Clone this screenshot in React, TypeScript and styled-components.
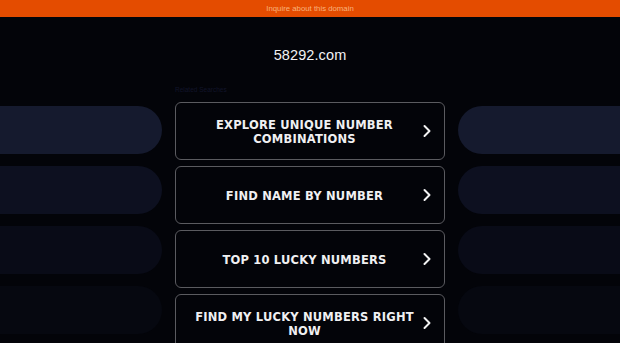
import styled, { createGlobalStyle } from "styled-components";

const GlobalStyle = createGlobalStyle`
  html, body {
    margin: 0;
    padding: 0;
    background: #030409;
  }
  body {
    font-family: "Liberation Sans", Arial, sans-serif;
  }
`;

const searches = [
  "Explore Unique Number Combinations",
  "Find Name by Number",
  "Top 10 Lucky Numbers",
  "Find My Lucky Numbers Right Now",
];

const pillColors = ["#151a2e", "#0d1020", "#090b17", "#060810"];

function Chevron() {
  return (
    <svg width="12" height="14" viewBox="0 0 12 14" fill="none">
      <path d="M3.5 2 L8.5 7 L3.5 12" stroke="#f2f2f2" strokeWidth="2" strokeLinecap="round" strokeLinejoin="round" />
    </svg>
  );
}

export default function App() {
  return (
    <>
      <GlobalStyle />
      <Page>
        <TopBar>Inquire about this domain</TopBar>
        <Domain>58292.com</Domain>
        <Main>
          <SideColumn>
            {pillColors.map((c) => (
              <Pill key={c} color={c} side="left" />
            ))}
          </SideColumn>
          <CenterColumn>
            <Label>Related Searches</Label>
            {searches.map((s) => (
              <SearchButton key={s}>
                <ButtonText>{s}</ButtonText>
                <ChevronBox>
                  <Chevron />
                </ChevronBox>
              </SearchButton>
            ))}
          </CenterColumn>
          <SideColumn>
            {pillColors.map((c) => (
              <Pill key={c} color={c} side="right" />
            ))}
          </SideColumn>
        </Main>
      </Page>
    </>
  );
}

const Page = styled.div`
  width: 620px;
  height: 343px;
  overflow: hidden;
  background: #030409;
`;

const TopBar = styled.div`
  height: 17px;
  background: #e44c00;
  color: #f9b27c;
  font-size: 7.8px;
  display: flex;
  align-items: center;
  justify-content: center;
`;

const Domain = styled.div`
  height: 67px;
  display: flex;
  align-items: center;
  justify-content: center;
  color: #f2f2f4;
  font-size: 14.5px;
  letter-spacing: 0.1px;
  padding-top: 8px;
  box-sizing: border-box;
`;

const Main = styled.div`
  display: grid;
  grid-template-columns: 162px 270px 162px;
  column-gap: 13px;
`;

const SideColumn = styled.div`
  display: flex;
  flex-direction: column;
  gap: 12px;
  padding-top: 22px;
`;

const Pill = styled.div<{ color: string; side: "left" | "right" }>`
  height: 48px;
  background: ${(p) => p.color};
  border-radius: ${(p) => (p.side === "left" ? "0 24px 24px 0" : "24px 0 0 24px")};
`;

const CenterColumn = styled.div`
  display: flex;
  flex-direction: column;
  gap: 6px;
`;

const Label = styled.div`
  height: 12px;
  font-size: 6.5px;
  line-height: 12px;
  color: #12142a;
`;

const SearchButton = styled.div`
  height: 58px;
  box-sizing: border-box;
  border: 1.5px solid #5b5b60;
  border-radius: 6px;
  display: flex;
  align-items: center;
  padding: 0 11px 0 18px;
`;

const ButtonText = styled.div`
  flex: 1;
  text-align: center;
  color: #f0f0f2;
  font-family: "DejaVu Sans", Verdana, sans-serif;
  font-weight: bold;
  font-size: 11.5px;
  line-height: 14px;
  letter-spacing: 0.2px;
  text-transform: uppercase;
  padding-top: 1px;
`;

const ChevronBox = styled.div`
  width: 12px;
  margin-left: 6px;
  display: flex;
  align-items: center;
`;
